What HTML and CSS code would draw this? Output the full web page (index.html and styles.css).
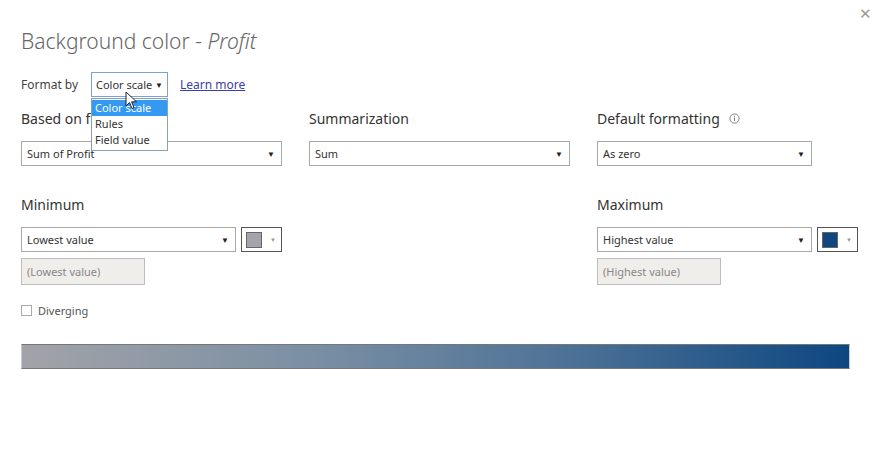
FILE: index.html
```html
<!DOCTYPE html>
<html lang="en">
<head>
    <meta charset="UTF-8">
    <title>Background color - Profit</title>
    <link rel="stylesheet" href="styles.css">
</head>
<body>
    <div class="dialog">
        <button class="close" aria-label="Close">&#x2715;</button>
        <h1 class="title">Background color - <em>Profit</em></h1>

        <div class="format-row">
            <span class="format-label">Format by</span>
            <div class="format-select">
                <div class="dropdown small">
                    <span>Color scale</span>
                    <span class="caret">&#9660;</span>
                </div>
                <ul class="menu">
                    <li class="active">Color scale</li>
                    <li>Rules</li>
                    <li>Field value</li>
                </ul>
                <svg class="cursor" width="13" height="19" viewBox="0 0 13 19">
                    <path d="M1 1 L1 15 L4.5 11.5 L7 17.5 L9 16.6 L6.6 10.8 L11.5 10.8 Z" fill="#fff" stroke="#222" stroke-width="1"/>
                </svg>
            </div>
            <a href="#" class="learn">Learn more</a>
        </div>

        <div class="grid">
            <div class="field">
                <div class="label">Based on field</div>
                <div class="dropdown wide">
                    <span>Sum of Profit</span>
                    <span class="caret">&#9660;</span>
                </div>
            </div>
            <div class="field">
                <div class="label">Summarization</div>
                <div class="dropdown wide">
                    <span>Sum</span>
                    <span class="caret">&#9660;</span>
                </div>
            </div>
            <div class="field">
                <div class="label">Default formatting
                    <svg class="info" width="11" height="11" viewBox="0 0 11 11">
                        <circle cx="5.5" cy="5.5" r="4.6" fill="none" stroke="#777" stroke-width="0.9"/>
                        <rect x="5" y="4.6" width="1" height="3.4" fill="#777"/>
                        <rect x="5" y="2.8" width="1" height="1" fill="#777"/>
                    </svg>
                </div>
                <div class="dropdown">
                    <span>As zero</span>
                    <span class="caret">&#9660;</span>
                </div>
            </div>

            <div class="field range">
                <div class="label">Minimum</div>
                <div class="picker">
                    <div class="dropdown">
                        <span>Lowest value</span>
                        <span class="caret">&#9660;</span>
                    </div>
                    <div class="swatch-btn">
                        <span class="swatch grey"></span>
                        <span class="mini-caret">&#9660;</span>
                    </div>
                </div>
                <div class="value-box">(Lowest value)</div>
                <label class="check">
                    <span class="box"></span>
                    Diverging
                </label>
            </div>
            <div class="field range"></div>
            <div class="field range">
                <div class="label">Maximum</div>
                <div class="picker">
                    <div class="dropdown">
                        <span>Highest value</span>
                        <span class="caret">&#9660;</span>
                    </div>
                    <div class="swatch-btn">
                        <span class="swatch blue"></span>
                        <span class="mini-caret">&#9660;</span>
                    </div>
                </div>
                <div class="value-box">(Highest value)</div>
            </div>
        </div>

        <div class="gradient"></div>
    </div>
</body>
</html>
```

FILE: styles.css
```css
body {
    margin: 0;
    background: #fff;
    font-family: "Noto Sans", "Open Sans", sans-serif;
    color: #333;
}
.dialog {
    position: relative;
    width: 875px;
    height: 472px;
    padding: 24px 0 0 21px;
    box-sizing: border-box;
}
.close {
    position: absolute;
    top: 3px;
    right: 1px;
    border: none;
    background: none;
    color: #999;
    font-size: 15px;
    padding: 2px;
    cursor: pointer;
}
.title {
    margin: 0;
    font-size: 21px;
    font-weight: 300;
    color: #666;
    height: 34px;
    line-height: 34px;
}
.title em {
    font-style: italic;
}
.format-row {
    display: flex;
    align-items: center;
    margin-top: 14px;
    height: 25px;
    font-size: 12px;
}
.format-label {
    width: 70px;
    color: #444;
}
.format-select {
    position: relative;
}
.learn {
    margin-left: 12px;
    color: #3b3ea8;
    text-decoration: underline;
}
.dropdown {
    display: flex;
    align-items: center;
    justify-content: space-between;
    box-sizing: border-box;
    height: 25px;
    width: 215px;
    padding: 0 6px 0 5px;
    border: 1px solid #a8a8a8;
    background: #fff;
    font-size: 11px;
    color: #333;
}
.dropdown.small {
    width: 77px;
    padding: 0 4px;
    border-color: #7aa3d4;
    font-size: 11px;
}
.dropdown.wide {
    width: 261px;
}
.caret {
    font-size: 8px;
    color: #222;
}
.menu {
    position: absolute;
    top: 26px;
    left: 0;
    width: 77px;
    margin: 0;
    padding: 1px 0 2px;
    list-style: none;
    box-sizing: border-box;
    border: 1px solid #8a9fb8;
    background: #fff;
    font-size: 11px;
    z-index: 2;
}
.menu li {
    height: 16px;
    line-height: 16px;
    padding-left: 3px;
}
.menu li.active {
    background: #3399f3;
    color: #fff;
}
.cursor {
    position: absolute;
    left: 34px;
    top: 19px;
    z-index: 3;
}
.grid {
    display: grid;
    grid-template-columns: 288px 288px 1fr;
    margin-top: 10px;
}
.label {
    display: flex;
    align-items: center;
    font-size: 14px;
    color: #333;
    height: 22px;
    margin-bottom: 12px;
}
.info {
    margin-left: 9px;
}
.range {
    margin-top: 27px;
}
.picker {
    display: flex;
    gap: 5px;
}
.swatch-btn {
    display: flex;
    align-items: center;
    box-sizing: border-box;
    width: 41px;
    height: 25px;
    border: 1px solid #555;
    padding-left: 4px;
}
.swatch {
    width: 14px;
    height: 14px;
    border: 1px solid #666;
}
.swatch.grey {
    background: #a4a4aa;
}
.swatch.blue {
    background: #0f4880;
}
.mini-caret {
    font-size: 6px;
    color: #999;
    margin-left: 8px;
}
.value-box {
    box-sizing: border-box;
    width: 124px;
    height: 27px;
    margin-top: 6px;
    padding-left: 5px;
    line-height: 25px;
    border: 1px solid #bdbdbd;
    background: #efeeea;
    font-size: 11px;
    color: #888;
}
.check {
    display: flex;
    align-items: center;
    margin-top: 18px;
    font-size: 11px;
    color: #555;
}
.check .box {
    width: 9px;
    height: 9px;
    border: 1px solid #aaa;
    margin-right: 6px;
}
.gradient {
    width: 829px;
    height: 25px;
    margin-top: 26px;
    box-sizing: border-box;
    border: 1px solid #c8ccd2;
    border-top-color: #777;
    border-bottom-color: #777;
    background: linear-gradient(to right, #a2a3a8, #7a8fa4 35%, #4f7397 65%, #0d4781);
}
```
